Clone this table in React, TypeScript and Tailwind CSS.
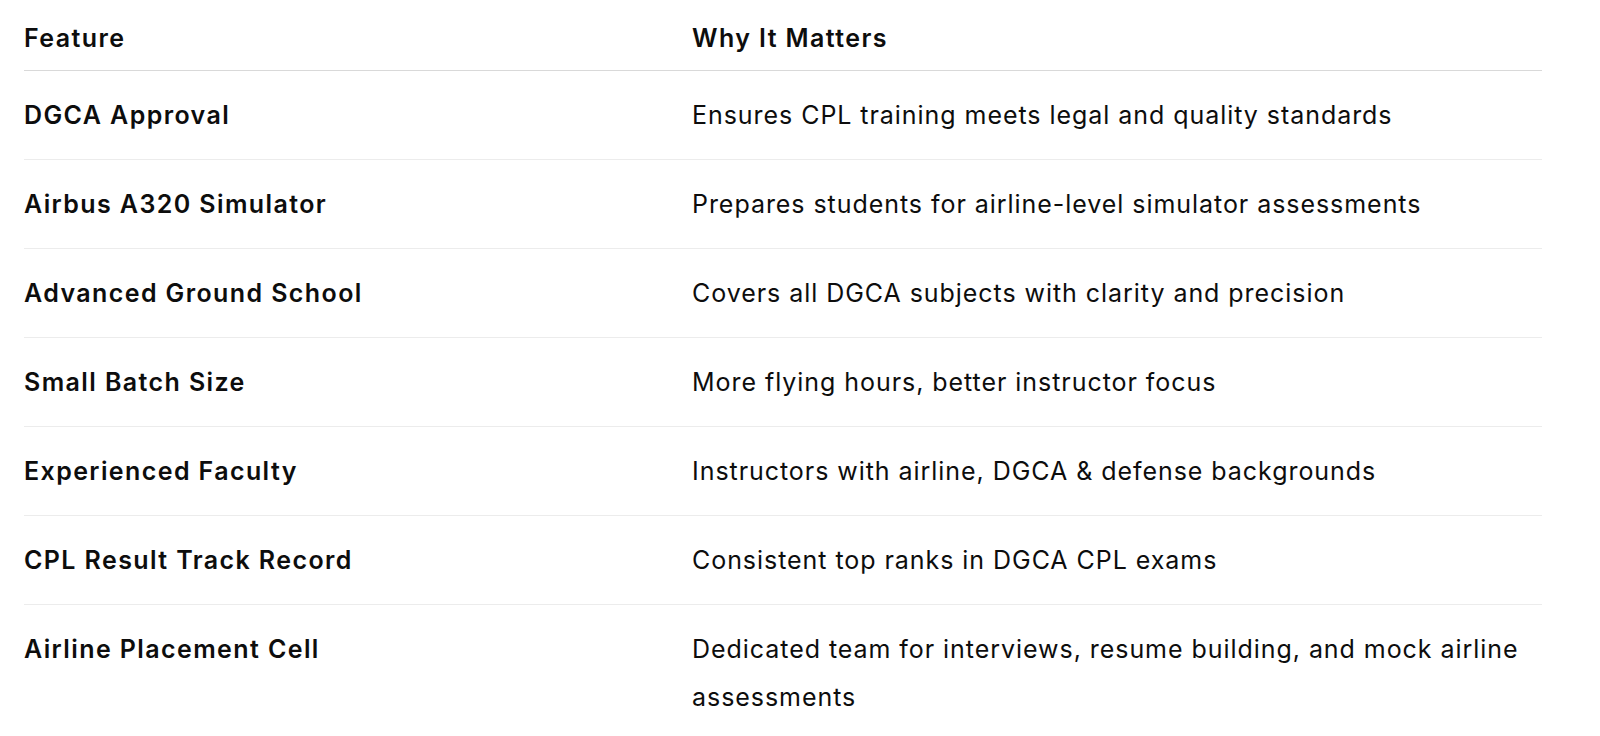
const rows = [
  ['DGCA Approval', 'Ensures CPL training meets legal and quality standards'],
  ['Airbus A320 Simulator', 'Prepares students for airline-level simulator assessments'],
  ['Advanced Ground School', 'Covers all DGCA subjects with clarity and precision'],
  ['Small Batch Size', 'More flying hours, better instructor focus'],
  ['Experienced Faculty', 'Instructors with airline, DGCA & defense backgrounds'],
  ['CPL Result Track Record', 'Consistent top ranks in DGCA CPL exams'],
  [
    'Airline Placement Cell',
    'Dedicated team for interviews, resume building, and mock airline assessments',
  ],
];

export default function App() {
  return (
    <div className="min-h-screen bg-white px-6 font-['Inter',sans-serif] text-[#0d0d0d]">
      <table className="w-[1518px] border-collapse text-left text-[25px] leading-[48px] tracking-[0.95px]">
        <thead>
          <tr className="border-b border-[#d9d9d9]">
            <th className="w-[668px] pt-[14px] pb-[8px] font-semibold tracking-[1.4px]">
              Feature
            </th>
            <th className="pt-[14px] pb-[8px] font-semibold tracking-[1.4px]">
              Why It Matters
            </th>
          </tr>
        </thead>
        <tbody>
          {rows.map(([feature, why], i) => (
            <tr
              key={feature}
              className={i < rows.length - 1 ? 'border-b border-[#ececec]' : ''}
            >
              <td className="py-5 align-top font-semibold tracking-[1.4px]">{feature}</td>
              <td className="py-5 align-top">{why}</td>
            </tr>
          ))}
        </tbody>
      </table>
    </div>
  );
}
